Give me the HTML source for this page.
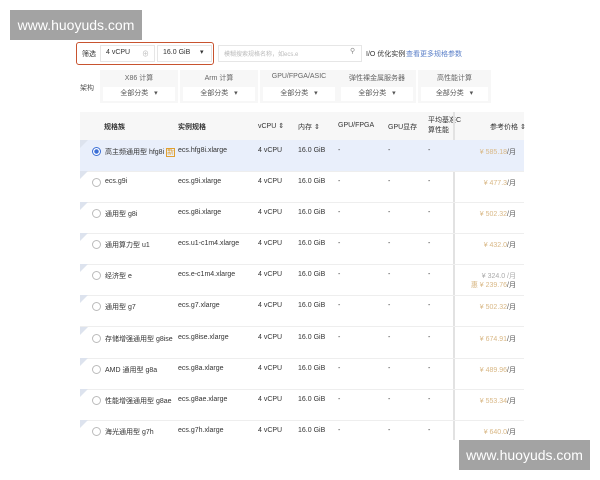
<!DOCTYPE html><html><head><meta charset="utf-8"><style>
body{margin:0;width:600px;height:480px;background:#fff;position:relative;overflow:hidden;font-family:"Liberation Sans","Noto Sans CJK SC",sans-serif;font-size:7px;color:#333}
.a{position:absolute;white-space:nowrap}
.wm{position:absolute;background:#a3a3a3;color:#fff;font-size:14px;display:flex;align-items:center;justify-content:center}
.box{position:absolute;border:1px solid #e6e6e6;background:#fff}
.row{position:absolute;left:80px;width:444px;height:31px;border-bottom:1px solid #eee}
.row .a{top:7px}
.rad{position:absolute;left:12px;top:7px;width:7px;height:7px;border:1px solid #bbb;border-radius:50%;background:#fff}
.pr{position:absolute;right:8px;top:7px;color:#d9b886}
.pr b{font-weight:normal;color:#555}
.cat{position:absolute;top:70px;height:33px;background:#f7f7f7}
.cat span{display:block;text-align:center;color:#666;margin-top:3px}
.cat i{position:absolute;left:3px;right:3px;top:17px;height:14px;background:#fff;font-style:normal;color:#555;text-align:center;line-height:14px}
.tri{position:absolute;left:0;top:0;width:0;height:0;border-top:8px solid #dde3ee;border-right:8px solid transparent}
</style></head><body>
<div class="wm" style="left:10px;top:10px;width:132px;height:30px">www.huoyuds.com</div>
<div class="wm" style="left:459px;top:440px;width:131px;height:30px">www.huoyuds.com</div>

<div class="a" style="left:76px;top:42px;width:136px;height:21px;border:1.5px solid #c8532f;border-radius:3px"></div>
<div class="a" style="left:82px;top:49px;color:#333">筛选</div>
<div class="box" style="left:100px;top:45px;width:53px;height:15px"></div>
<div class="a" style="left:106px;top:49px">4 vCPU</div><div class="a" style="left:142px;top:49px;color:#bbb">⊕</div>
<div class="box" style="left:157px;top:45px;width:53px;height:15px"></div>
<div class="a" style="left:163px;top:49px">16.0 GiB</div><div class="a" style="left:200px;top:48px">▾</div>
<div class="box" style="left:218px;top:45px;width:142px;height:15px"></div>
<div class="a" style="left:224px;top:49px;color:#bbb;font-size:6px">模糊搜索规格名称，如ecs.e</div>
<div class="a" style="left:350px;top:47px;color:#888">⚲</div>
<div class="a" style="left:366px;top:49px">I/O 优化实例</div>
<div class="a" style="left:406px;top:49px;color:#5a7fc8">查看更多规格参数</div>

<div class="a" style="left:80px;top:83px;color:#555">架构</div>
<div class="cat" style="left:100px;width:78px"><span>X86 计算</span><i>全部分类 &nbsp;&nbsp;▾</i></div>
<div class="cat" style="left:180px;width:78px"><span>Arm 计算</span><i>全部分类 &nbsp;&nbsp;▾</i></div>
<div class="cat" style="left:260px;width:78px"><span>GPU/FPGA/ASIC</span><i>全部分类 &nbsp;&nbsp;▾</i></div>
<div class="cat" style="left:338px;width:78px"><span>弹性裸金属服务器</span><i>全部分类 &nbsp;&nbsp;▾</i></div>
<div class="cat" style="left:418px;width:73px"><span>高性能计算</span><i>全部分类 &nbsp;&nbsp;▾</i></div>

<div class="a" style="left:80px;top:112px;width:444px;height:28px;background:#f7f7f7"></div>
<div class="a" style="left:104px;top:122px;font-weight:bold">规格族</div>
<div class="a" style="left:178px;top:122px;font-weight:bold">实例规格</div>
<div class="a" style="left:258px;top:122px">vCPU ⇕</div>
<div class="a" style="left:298px;top:122px">内存 ⇕</div>
<div class="a" style="left:338px;top:122px">GPU/FPGA</div>
<div class="a" style="left:388px;top:122px">GPU显存</div>
<div class="a" style="left:428px;top:116px;line-height:10px">平均基准C<br>算性能</div>
<div class="a" style="left:490px;top:122px">参考价格 ⇕</div>
<div class="a" style="left:453px;top:112px;width:2px;height:328px;background:#e2e2e2"></div>

<div class="row" style="top:140px;background:#e9effb"><div class="tri"></div><div class="rad" style="border-color:#3b6fd6;background:radial-gradient(#3b6fd6 40%,#fff 50%)"></div><div class="a" style="left:25px">高主频通用型 hfg8i <span style="color:#e0a030;border:1px solid #e0a030">新</span></div><div class="a" style="left:98px">ecs.hfg8i.xlarge</div><div class="a" style="left:178px">4 vCPU</div><div class="a" style="left:218px">16.0 GiB</div><div class="a" style="left:258px">-</div><div class="a" style="left:308px">-</div><div class="a" style="left:348px">-</div><div class="pr">¥ 585.18<b>/月</b></div></div>
<div class="row" style="top:171px"><div class="tri"></div><div class="rad"></div><div class="a" style="left:25px">ecs.g9i</div><div class="a" style="left:98px">ecs.g9i.xlarge</div><div class="a" style="left:178px">4 vCPU</div><div class="a" style="left:218px">16.0 GiB</div><div class="a" style="left:258px">-</div><div class="a" style="left:308px">-</div><div class="a" style="left:348px">-</div><div class="pr">¥ 477.3<b>/月</b></div></div>
<div class="row" style="top:202px"><div class="tri"></div><div class="rad"></div><div class="a" style="left:25px">通用型 g8i</div><div class="a" style="left:98px">ecs.g8i.xlarge</div><div class="a" style="left:178px">4 vCPU</div><div class="a" style="left:218px">16.0 GiB</div><div class="a" style="left:258px">-</div><div class="a" style="left:308px">-</div><div class="a" style="left:348px">-</div><div class="pr">¥ 502.32<b>/月</b></div></div>
<div class="row" style="top:233px"><div class="tri"></div><div class="rad"></div><div class="a" style="left:25px">通用算力型 u1</div><div class="a" style="left:98px">ecs.u1-c1m4.xlarge</div><div class="a" style="left:178px">4 vCPU</div><div class="a" style="left:218px">16.0 GiB</div><div class="a" style="left:258px">-</div><div class="a" style="left:308px">-</div><div class="a" style="left:348px">-</div><div class="pr">¥ 432.0<b>/月</b></div></div>
<div class="row" style="top:264px"><div class="tri"></div><div class="rad"></div><div class="a" style="left:25px">经济型 e</div><div class="a" style="left:98px">ecs.e-c1m4.xlarge</div><div class="a" style="left:178px">4 vCPU</div><div class="a" style="left:218px">16.0 GiB</div><div class="a" style="left:258px">-</div><div class="a" style="left:308px">-</div><div class="a" style="left:348px">-</div><div class="pr" style="color:#aaa">¥ 324.0 /月</div><div class="pr" style="top:16px">惠 ¥ 239.76<b>/月</b></div></div>
<div class="row" style="top:295px"><div class="tri"></div><div class="rad"></div><div class="a" style="left:25px">通用型 g7</div><div class="a" style="left:98px">ecs.g7.xlarge</div><div class="a" style="left:178px">4 vCPU</div><div class="a" style="left:218px">16.0 GiB</div><div class="a" style="left:258px">-</div><div class="a" style="left:308px">-</div><div class="a" style="left:348px">-</div><div class="pr">¥ 502.32<b>/月</b></div></div>
<div class="row" style="top:327px"><div class="tri"></div><div class="rad"></div><div class="a" style="left:25px">存储增强通用型 g8ise</div><div class="a" style="left:98px">ecs.g8ise.xlarge</div><div class="a" style="left:178px">4 vCPU</div><div class="a" style="left:218px">16.0 GiB</div><div class="a" style="left:258px">-</div><div class="a" style="left:308px">-</div><div class="a" style="left:348px">-</div><div class="pr">¥ 674.91<b>/月</b></div></div>
<div class="row" style="top:358px"><div class="tri"></div><div class="rad"></div><div class="a" style="left:25px">AMD 通用型 g8a</div><div class="a" style="left:98px">ecs.g8a.xlarge</div><div class="a" style="left:178px">4 vCPU</div><div class="a" style="left:218px">16.0 GiB</div><div class="a" style="left:258px">-</div><div class="a" style="left:308px">-</div><div class="a" style="left:348px">-</div><div class="pr">¥ 489.96<b>/月</b></div></div>
<div class="row" style="top:389px"><div class="tri"></div><div class="rad"></div><div class="a" style="left:25px">性能增强通用型 g8ae</div><div class="a" style="left:98px">ecs.g8ae.xlarge</div><div class="a" style="left:178px">4 vCPU</div><div class="a" style="left:218px">16.0 GiB</div><div class="a" style="left:258px">-</div><div class="a" style="left:308px">-</div><div class="a" style="left:348px">-</div><div class="pr">¥ 553.34<b>/月</b></div></div>
<div class="row" style="top:420px;border:none"><div class="tri"></div><div class="rad"></div><div class="a" style="left:25px">海光通用型 g7h</div><div class="a" style="left:98px">ecs.g7h.xlarge</div><div class="a" style="left:178px">4 vCPU</div><div class="a" style="left:218px">16.0 GiB</div><div class="a" style="left:258px">-</div><div class="a" style="left:308px">-</div><div class="a" style="left:348px">-</div><div class="pr">¥ 640.0<b>/月</b></div></div>
</body></html>
